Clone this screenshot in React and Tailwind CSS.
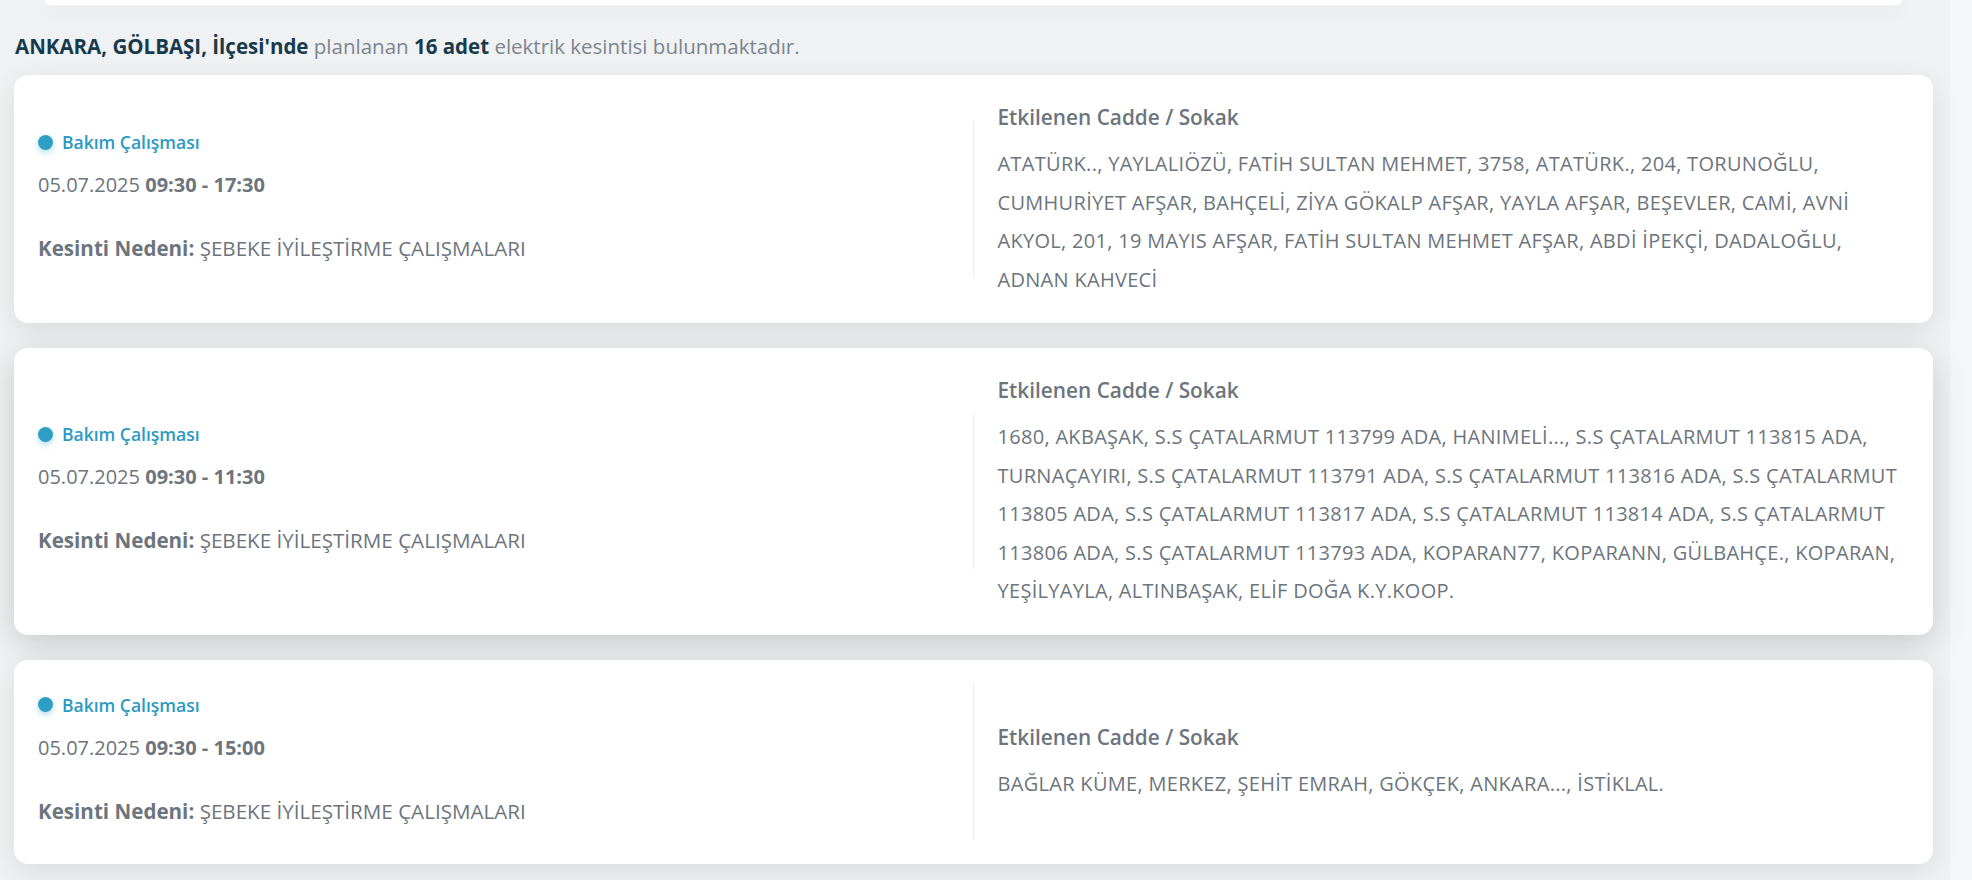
import React from 'react';

const outages = [
  {
    start: '09:30',
    end: '17:30',
    streets: [
      'ATATÜRK.., YAYLALIÖZÜ, FATİH SULTAN MEHMET, 3758, ATATÜRK., 204, TORUNOĞLU,',
      'CUMHURİYET AFŞAR, BAHÇELİ, ZİYA GÖKALP AFŞAR, YAYLA AFŞAR, BEŞEVLER, CAMİ, AVNİ',
      'AKYOL, 201, 19 MAYIS AFŞAR, FATİH SULTAN MEHMET AFŞAR, ABDİ İPEKÇİ, DADALOĞLU,',
      'ADNAN KAHVECİ',
    ],
  },
  {
    start: '09:30',
    end: '11:30',
    raised: true,
    streets: [
      '1680, AKBAŞAK, S.S ÇATALARMUT 113799 ADA, HANIMELİ..., S.S ÇATALARMUT 113815 ADA,',
      'TURNAÇAYIRI, S.S ÇATALARMUT 113791 ADA, S.S ÇATALARMUT 113816 ADA, S.S ÇATALARMUT',
      '113805 ADA, S.S ÇATALARMUT 113817 ADA, S.S ÇATALARMUT 113814 ADA, S.S ÇATALARMUT',
      '113806 ADA, S.S ÇATALARMUT 113793 ADA, KOPARAN77, KOPARANN, GÜLBAHÇE., KOPARAN,',
      'YEŞİLYAYLA, ALTINBAŞAK, ELİF DOĞA K.Y.KOOP.',
    ],
  },
  {
    start: '09:30',
    end: '15:00',
    streets: ['BAĞLAR KÜME, MERKEZ, ŞEHİT EMRAH, GÖKÇEK, ANKARA..., İSTİKLAL.'],
  },
];

const OutageCard = ({ item }) => (
  <div
    className={`bg-white rounded-[14px] px-[12px] py-[24px] grid grid-cols-2 items-center ${
      item.raised
        ? 'shadow-[0_10px_34px_rgba(0,0,0,0.16)]'
        : 'shadow-[0_8px_28px_rgba(0,0,0,0.09)]'
    }`}
  >
    <div className="h-[156px] px-[12px] border-r border-[#eceef1] flex flex-col pt-[8px]">
      <div className="flex items-center gap-[9px] h-[26px]">
        <span className="w-[15px] h-[15px] rounded-full bg-[#2f9ec4] shadow-[0_3px_6px_rgba(47,158,196,0.35)]" />
        <span className="text-[17.5px] leading-[26px] font-semibold text-[#2b9ac2]">Bakım Çalışması</span>
      </div>
      <p className="mt-[15px] text-[20px] leading-[30px] text-[#6c757d]">
        05.07.2025{' '}
        <span className="font-bold">
          {item.start} - {item.end}
        </span>
      </p>
      <p className="mt-[33px] text-[20.6px] leading-[30px] text-[#6c757d]">
        <span className="font-bold">Kesinti Nedeni:</span> ŞEBEKE İYİLEŞTİRME ÇALIŞMALARI
      </p>
    </div>
    <div className="pl-[24px] pr-[12px]">
      <h4 className="text-[20.8px] leading-[36px] font-semibold text-[#6c757d]">Etkilenen Cadde / Sokak</h4>
      <p className="mt-[10px] text-[20px] leading-[38.5px] tracking-[0.3px] text-[#6c757d]">
        {item.streets.map((line, i) => (
          <span key={i} className="block whitespace-nowrap">
            {line}
          </span>
        ))}
      </p>
    </div>
  </div>
);

export default function App() {
  return (
    <div className="min-h-[880px] bg-[#f5f6f7] font-['Open_Sans',sans-serif]">
      <div className="w-[1950px] min-h-[880px] bg-[#eff1f3] pl-[14px] pr-[17px] pb-[20px]">
        <div className="mx-[31px] h-[5px] bg-white rounded-b-[14px] shadow-[0_6px_20px_rgba(0,0,0,0.07)]" />
        <p className="mt-[26px] mb-[14px] pl-[1px] text-[20.5px] leading-[30px] text-[#7b8590]">
          <span className="font-bold text-[#173a4d]">ANKARA, GÖLBAŞI, İlçesi'nde</span> planlanan{' '}
          <span className="font-bold text-[#173a4d]">16 adet</span> elektrik kesintisi bulunmaktadır.
        </p>
        <div className="flex flex-col gap-[25px]">
          {outages.map((item, i) => (
            <OutageCard key={i} item={item} />
          ))}
        </div>
      </div>
    </div>
  );
}
